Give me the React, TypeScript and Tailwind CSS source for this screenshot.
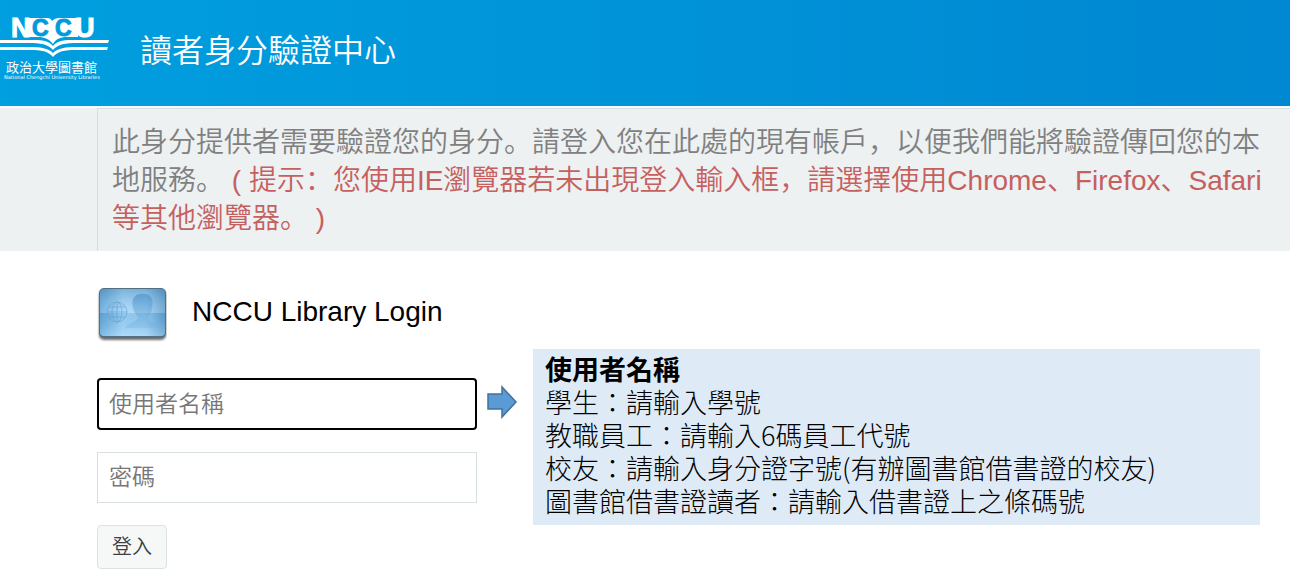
const sans = "font-['Liberation_Sans','Noto_Sans_CJK_SC',sans-serif]";

function LibraryLogo() {
  return (
    <svg viewBox="0 0 110 84" className="h-[84px] w-[110px] shrink-0" role="img" aria-label="NCCU Libraries">
      <path d="M28 18h19c3 0 4 1 5 3c2-2 4-3 7-3h19v19H67c-7 0-11 2-14 7c-4-5-8-7-15-7H28z" fill="#fff" />
      <g fontFamily="'Liberation Sans', sans-serif" fontWeight="700" strokeWidth="1">
        <text x="11" y="37" fontSize="27" fill="#fff" stroke="#fff">N</text>
        <text x="32" y="36" fontSize="23" fill="#009bdc" stroke="#009bdc">C</text>
        <text x="55" y="36" fontSize="23" fill="#009bdc" stroke="#009bdc">C</text>
        <text x="75" y="37" fontSize="27" fill="#fff" stroke="#fff">U</text>
      </g>
      <path d="M0 40h30c11 0 18 0 23 6c5-6 12-6 23-6h33l-1 3H78c-13 0-20 1-25 7c-5-6-12-7-25-7H0z" fill="#fff" />
      <path d="M0 47h28c13 0 20 1 25 6c5-5 12-6 25-6h30l-1 3H76c-12 0-18 1-23 7c-5-6-11-7-23-7H0z" fill="#fff" />
      <text x="6" y="72" fill="#fff" fontSize="13" fontFamily="'Noto Sans CJK TC', sans-serif">政治大學圖書館</text>
      <text x="4" y="79" fill="#fff" fontSize="5" fontFamily="'DejaVu Sans', sans-serif">National Chengchi University Libraries</text>
    </svg>
  );
}

function IdentityCard() {
  return (
    <svg viewBox="0 0 70 56" className="h-14 w-[70px] shrink-0" aria-hidden="true">
      <defs>
        <linearGradient id="card" x1="0" y1="0" x2="1" y2="0">
          <stop offset="0" stopColor="#5fa3d4" />
          <stop offset=".35" stopColor="#a9d8fa" />
          <stop offset=".7" stopColor="#a3d3f5" />
          <stop offset="1" stopColor="#5c9ac8" />
        </linearGradient>
        <linearGradient id="shade" x1="0" y1="0" x2="0" y2="1">
          <stop offset="0" stopColor="#3879aa" stopOpacity=".4" />
          <stop offset=".5" stopColor="#c5e5fc" stopOpacity=".25" />
          <stop offset=".52" stopColor="#458dc0" stopOpacity=".22" />
          <stop offset="1" stopColor="#b5e2ff" stopOpacity=".4" />
        </linearGradient>
        <linearGradient id="person" x1="0" y1="0" x2="0" y2="1">
          <stop offset="0" stopColor="#4a90c8" stopOpacity=".65" />
          <stop offset="1" stopColor="#6fb0e0" stopOpacity=".3" />
        </linearGradient>
        <filter id="soft" x="-10%" y="-10%" width="120%" height="130%">
          <feGaussianBlur stdDeviation="1" />
        </filter>
      </defs>
      <rect x="2" y="3" width="67" height="50" rx="5" fill="#333" opacity=".7" filter="url(#soft)" />
      <rect x="2" y="1" width="67" height="50" rx="5" fill="#566f80" />
      <rect x="3" y="2" width="65" height="47" rx="4" fill="url(#card)" />
      <rect x="3" y="2" width="65" height="47" rx="4" fill="url(#shade)" />
      <path d="M38 9c3-3 12-3 15 0c3 3 3 7 2 12c0 4-2 7-4 9c0 6 11 5 14 11H28c3-6 12-5 13-11c-2-2-4-5-5-9c-1-5-1-9 2-12z" fill="url(#person)" />
      <g fill="none" stroke="#5b9ed2" strokeWidth="1" opacity=".6">
        <circle cx="20" cy="25" r="10" />
        <ellipse cx="20" cy="25" rx="5" ry="10" />
        <path d="M20 15v20M10 25h20M12 20h16M12 30h16" />
      </g>
    </svg>
  );
}

const hints = [
  "學生：請輸入學號",
  "教職員工：請輸入6碼員工代號",
  "校友：請輸入身分證字號(有辦圖書館借書證的校友)",
  "圖書館借書證讀者：請輸入借書證上之條碼號",
];

export default function App() {
  return (
    <div className={`min-h-screen bg-white ${sans}`}>
      <header className="flex h-[106px] items-start gap-[30px] bg-linear-to-r from-[#009fdf] to-[#0087d1]">
        <LibraryLogo />
        <h1 className="pt-7 text-[32px] leading-[46px] font-[350] text-white">讀者身分驗證中心</h1>
      </header>
      <section className="border-t-2 border-[#f6fafa] bg-[#edf1f2] pl-[97px]">
        <p lang="zh-Hans" className="border-t border-l border-[#d5dfdf] pt-[15px] pr-3 pb-[13px] pl-3.5 text-[28px] leading-[38px] font-[350] text-[#808080]">
          此身分提供者需要驗證您的身分。請登入您在此處的現有帳戶，以便我們能將驗證傳回您的本地服務。
          <span className="text-[#c5605f]"> ( 提示：您使用IE瀏覽器若未出現登入輸入框，請選擇使用Chrome、Firefox、Safari等其他瀏覽器。 )</span>
        </p>
      </section>
      <main className="pt-9 pr-[30px] pl-[97px]">
        <div className="flex items-center gap-[25px]">
          <IdentityCard />
          <h2 className="pb-1.5 text-[28px] leading-9 text-black">NCCU Library Login</h2>
        </div>
        <div className="flex items-start">
          <form className="w-[380px] shrink-0 pt-[35px]" onSubmit={(e) => e.preventDefault()}>
            <input
              type="text"
              aria-label="使用者名稱"
              placeholder="使用者名稱"
              className="block h-[52px] w-full rounded border-2 border-black px-2.5 text-[23px] font-[350] outline-none placeholder:text-[#777]"
            />
            <input
              type="password"
              aria-label="密碼"
              placeholder="密碼"
              className="mt-[22px] block h-[51px] w-full border border-[#d9e0e0] px-[11px] text-[23px] font-[350] outline-none placeholder:text-[#777]"
            />
            <button type="submit" className="mt-[22px] h-11 w-[70px] rounded border border-[#dae2e2] bg-[#f6f8f8] text-[20px] font-[350] text-[#3a4145]">
              登入
            </button>
          </form>
          <svg viewBox="0 0 32 34" className="mt-[42px] ml-[9px] h-[34px] w-8 shrink-0" aria-hidden="true">
            <path d="M2 9h14V2l14 15l-14 15v-8H2z" fill="#5b9bd5" stroke="#41719c" strokeWidth="1.5" />
          </svg>
          <aside className="mt-1.5 ml-[15px] min-h-[176px] flex-1 bg-[#deeaf6] px-3 pt-[3px] pb-2 font-['Noto_Sans_CJK_TC',sans-serif] text-[27px] leading-[33px] font-light text-black">
            <h3 className="font-bold">使用者名稱</h3>
            {hints.map((hint) => (
              <p key={hint}>{hint}</p>
            ))}
          </aside>
        </div>
      </main>
    </div>
  );
}
